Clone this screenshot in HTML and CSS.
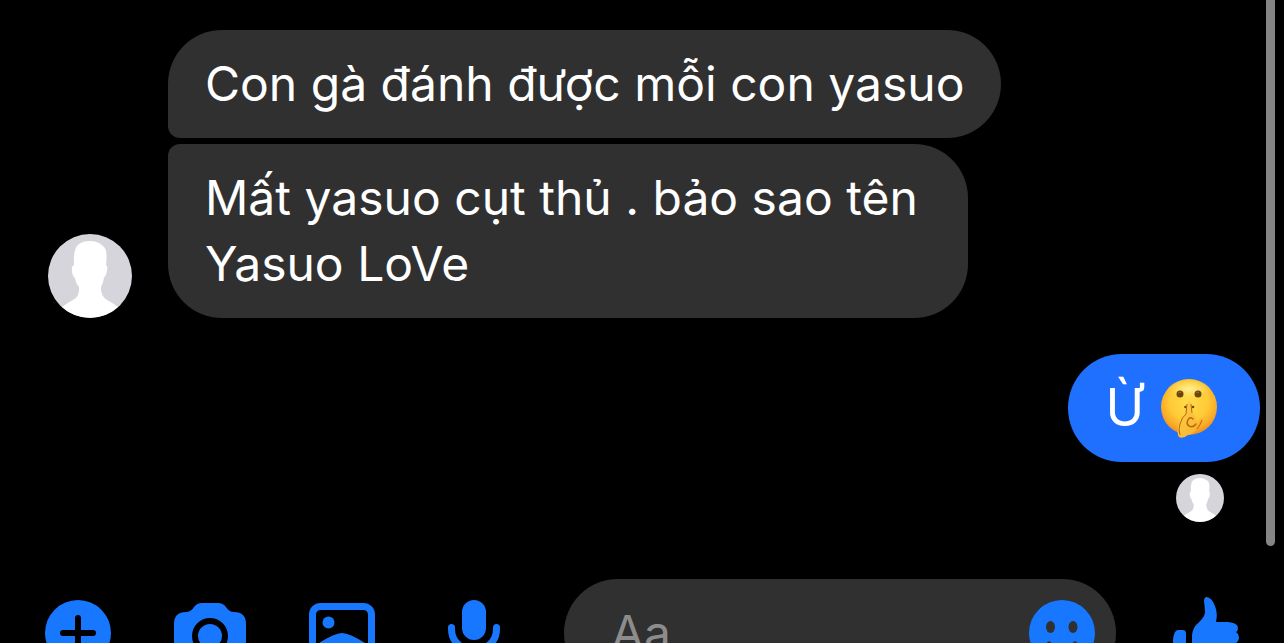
FILE: index.html
```html
<!DOCTYPE html>
<html lang="vi">
<head>
<meta charset="utf-8">
<meta name="viewport" content="width=device-width, initial-scale=1">
<title>Chat</title>
<link rel="stylesheet" href="styles.css">
</head>
<body>
<svg class="defs" aria-hidden="true">
  <symbol id="person" viewBox="0 0 84 84">
    <circle cx="42" cy="42" r="42" fill="#d5d5db"/>
    <path fill="#fff" d="M14 73Q19 69 25 66Q31 63 31 56V53Q28 50 27 44Q24 42 24 36Q23 32 26 31Q25 14 31 10Q35 7 42 7Q50 7 55 12Q60 15 58 31Q60 32 59 37Q58 42 56 44Q55 50 53 53V56Q54 63 59 66Q65 69 70 73A42 42 0 0 1 14 73Z"/>
  </symbol>
</svg>
<div class="chat">
  <main class="thread">
    <section class="received">
      <svg class="avatar" role="img" aria-label="Avatar"><use href="#person"/></svg>
      <div class="stack">
        <p class="bubble bubble-first">Con gà đánh được mỗi con yasuo</p>
        <p class="bubble bubble-last">Mất yasuo cụt thủ . bảo sao tên Yasuo LoVe</p>
      </div>
    </section>
    <section class="sent">
      <p class="bubble bubble-sent">
        <span>Ừ</span>
        <svg class="emoji" viewBox="0 0 60 60" role="img" aria-label="🤫">
          <defs>
            <radialGradient id="face" cx=".5" cy=".4" r=".62">
              <stop offset="0" stop-color="#ffdc4a"/>
              <stop offset=".55" stop-color="#ffcb37"/>
              <stop offset=".82" stop-color="#f9a926"/>
              <stop offset="1" stop-color="#e8861f"/>
            </radialGradient>
            <radialGradient id="shine">
              <stop offset="0" stop-color="#fff3a0" stop-opacity=".95"/>
              <stop offset="1" stop-color="#ffe066" stop-opacity="0"/>
            </radialGradient>
            <linearGradient id="hand" x2="1" y2="1">
              <stop offset="0" stop-color="#ffd34a"/>
              <stop offset=".7" stop-color="#f9b934"/>
              <stop offset="1" stop-color="#dd8420"/>
            </linearGradient>
          </defs>
          <circle cx="30" cy="29" r="28" fill="url(#face)"/>
          <ellipse cx="30" cy="11" rx="22" ry="10" fill="url(#shine)"/>
          <ellipse cx="21" cy="16" rx="3.500" ry="3.500" fill="#6b4510"/>
          <ellipse cx="39" cy="16" rx="3.500" ry="3.500" fill="#6b4510"/>
          <path d="M19 15q2-2 3 0M37 15q2-2 3 0" fill="none" stroke="#a37321"/>
          <circle cx="26.500" cy="29" r="1.300" fill="#784208"/>
          <circle cx="34" cy="29" r="1.300" fill="#784208"/>
          <path d="M27 36L28 26Q28 23 30 23Q32 23 32 26L33 35Q38 38 37 46L41 41Q43 39 44 41Q44 44 38 52Q35 56 29 57Q24 61 20 59Q18 57 19 50Q20 41 27 36Z" fill="url(#hand)"/>
          <path d="M27 36L28 26M32 26L33 35M21 57Q19 52 21 46Q23 39 27 36M43 42Q42 46 38 51" fill="none" stroke="#b9660f" stroke-width="1"/>
          <path d="M37 46Q34 50 30 48Q27 46 29 42Q31 38 34 41" fill="none" stroke="#b9660f" stroke-width="1.500" stroke-linecap="round"/>
        </svg>
      </p>
      <svg class="avatar avatar-seen" role="img" aria-label="Đã xem"><use href="#person"/></svg>
    </section>
  </main>
  <footer class="composer">
    <button class="tool" aria-label="Thêm">
      <svg class="icon" viewBox="0 0 72 72"><circle cx="36" cy="36" r="33" fill="currentColor"/><path d="M36 21v30M21 36h30" stroke="#000" stroke-width="6" stroke-linecap="round"/></svg>
    </button>
    <button class="tool" aria-label="Máy ảnh">
      <svg class="icon" viewBox="0 0 72 72"><path fill="currentColor" d="M0 27Q0 15 12 15Q17 15 20 10Q23 6 28 6H44Q49 6 52 10Q55 15 60 15Q72 15 72 27V54Q72 66 60 66H12Q0 66 0 54Z"/><circle cx="36" cy="39" r="15" fill="none" stroke="#000" stroke-width="6"/></svg>
    </button>
    <button class="tool" aria-label="Ảnh">
      <svg class="icon" viewBox="0 0 72 72"><rect x="6.500" y="9.500" width="59" height="59" rx="8" fill="none" stroke="currentColor" stroke-width="7"/><circle cx="22.500" cy="25.500" r="6" fill="currentColor"/><path d="M10 48Q28 36 36 36Q44 36 62 48V66H10Z" fill="currentColor"/></svg>
    </button>
    <button class="tool" aria-label="Ghi âm">
      <svg class="icon" viewBox="0 0 72 72"><rect x="24" y="3" width="24" height="40" rx="12" fill="currentColor"/><path d="M13.500 30.500V32C13.500 60 58.500 60 58.500 32V30.500M36 53v14" fill="none" stroke="currentColor" stroke-width="7" stroke-linecap="round"/></svg>
    </button>
    <div class="field">
      <input class="entry" type="text" placeholder="Aa" aria-label="Tin nhắn">
      <button class="smile" aria-label="Biểu tượng cảm xúc">
        <svg class="icon" viewBox="0 0 72 72"><circle cx="36" cy="36" r="33" fill="currentColor"/><ellipse cx="24.500" cy="30" rx="4.500" ry="6" fill="#303030"/><ellipse cx="47" cy="30" rx="4.500" ry="6" fill="#303030"/><path d="M23 47Q36 60 49 47" fill="none" stroke="#303030" stroke-width="5" stroke-linecap="round"/></svg>
      </button>
    </div>
    <button class="tool" aria-label="Thích">
      <svg class="icon" viewBox="0 0 72 72"><path fill="currentColor" d="M3 43Q4 33 8 33H13Q16 33 16 37V66H7Q3 62 3 52ZM22 40Q22 33 26 28Q34 21 35 16Q35 12 34 4Q34 0 37 0Q42 1 45 9Q48 16 46 25H58Q68 26 68 31Q68 34 66 35Q69 37 69 40Q69 44 66 46Q68 54 62 57Q60 66 52 66H34Q26 66 22 60Z"/></svg>
    </button>
  </footer>
  <div class="scrollbar" aria-hidden="true"></div>
</div>
</body>
</html>
```
FILE: styles.css
```css
* {
  box-sizing: border-box;
}

body {
  margin: 0;
  background: #000;
  color: #fff;
  font-family: Inter, "Noto Sans", sans-serif;
  font-size: 48px;
  line-height: 66px;
}

.defs {
  position: absolute;
  width: 0;
  height: 0;
}

.chat {
  position: relative;
  height: 100vh;
  overflow: hidden;
}

.thread {
  padding: 30px 24px 57px 48px;
}

.received {
  display: flex;
  align-items: flex-end;
  gap: 36px;
}

.stack {
  display: flex;
  flex-direction: column;
  align-items: flex-start;
  gap: 6px;
}

.avatar {
  flex: none;
  display: block;
  width: 84px;
  height: 84px;
}

.bubble {
  margin: 0;
  padding: 21px 37px;
  border-radius: 54px;
  background: #303030;
}

.bubble-first {
  border-bottom-left-radius: 12px;
}

.bubble-last {
  max-width: 800px;
  border-top-left-radius: 12px;
}

.sent {
  display: flex;
  flex-direction: column;
  align-items: flex-end;
  gap: 12px;
  margin-top: 36px;
}

.bubble-sent {
  display: flex;
  align-items: center;
  gap: 15px;
  padding-right: 41px;
  background: #1f70ff;
  font-size: 52px;
}

.emoji {
  width: 60px;
  height: 60px;
}

.avatar-seen {
  width: 48px;
  height: 48px;
  margin-right: 36px;
}

.composer {
  display: flex;
  align-items: center;
  padding: 0 12px;
  color: #1877ff;
}

.tool,
.smile {
  flex: none;
  display: flex;
  justify-content: center;
  padding: 0;
  border: 0;
  background: none;
  color: inherit;
}

.tool {
  width: 132px;
}

.icon {
  width: 72px;
  height: 72px;
}

.field {
  flex: 1;
  display: flex;
  align-items: center;
  min-width: 0;
  height: 108px;
  margin: 0 24px;
  padding: 0 18px 0 47px;
  border-radius: 54px;
  background: #303030;
}

.entry {
  flex: 1;
  min-width: 0;
  padding: 0;
  border: 0;
  outline: 0;
  background: none;
  color: #fff;
  font: inherit;
}

.entry::placeholder {
  color: #8c8c8c;
  opacity: 1;
}

.scrollbar {
  position: absolute;
  top: 0;
  right: 9px;
  width: 9px;
  height: 546px;
  border-radius: 0 0 5px 5px;
  background: #858585;
}
```
